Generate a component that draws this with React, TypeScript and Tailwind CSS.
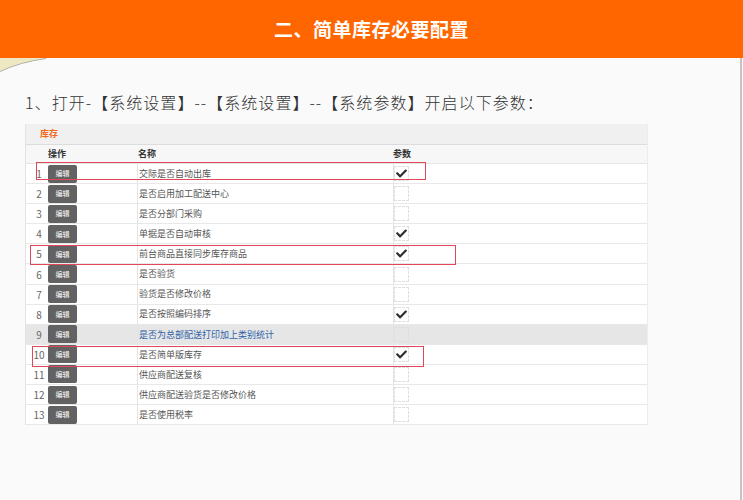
import React from "react";
import { FaCheck } from "react-icons/fa";

const rows: { n: number; name: string; checked: boolean; hl?: boolean }[] = [
  { n: 1, name: "交际是否自动出库", checked: true },
  { n: 2, name: "是否启用加工配送中心", checked: false },
  { n: 3, name: "是否分部门采购", checked: false },
  { n: 4, name: "单据是否自动审核", checked: true },
  { n: 5, name: "前台商品直接同步库存商品", checked: true },
  { n: 6, name: "是否验货", checked: false },
  { n: 7, name: "验货是否修改价格", checked: false },
  { n: 8, name: "是否按照编码排序", checked: true },
  { n: 9, name: "是否为总部配送打印加上类别统计", checked: false, hl: true },
  { n: 10, name: "是否简单版库存", checked: true },
  { n: 11, name: "供应商配送复核", checked: false },
  { n: 12, name: "供应商配送验货是否修改价格", checked: false },
  { n: 13, name: "是否使用税率", checked: false },
];

const cjk = { fontFamily: '"Noto Sans CJK SC", "Noto Sans", sans-serif' };

export default function App() {
  return (
    <div className="w-[743px] h-[500px] overflow-hidden bg-[#fafafa]" style={cjk}>
      <div className="h-[58px] bg-[#ff6600] flex items-center justify-center">
        <span className="text-white text-[19px] font-bold tracking-[0.5px]">二、简单库存必要配置</span>
      </div>
      <div className="relative w-[742px] h-[442px] border-r-2 border-[#c4c4c4]">
        <svg className="absolute left-0 top-0" width="48" height="15" viewBox="0 0 48 15">
          <path d="M0 0 L46 0 Q22 3 0 13 Z" fill="#eee8c2" />
          <path d="M0 13.5 Q20 4 46 0.5" stroke="#9a9a8a" strokeWidth="0.8" fill="none" />
        </svg>
        <div className="pt-[32px] pl-[25px] text-[16px] leading-[24px] text-[#333] tracking-[1.05px] font-light">
          1、打开-【系统设置】--【系统设置】--【系统参数】开启以下参数：
        </div>
        <div className="relative mt-[10px] ml-[25px] w-[623px] bg-white border-l border-[#e2e2e2] border-r border-r-[#ececec]">
          <div className="h-[21px] bg-[#f0f0f0] border-b border-[#dcdcdc] flex items-center pl-[14px]">
            <span className="text-[9px] font-bold text-[#f26a1b]">库存</span>
          </div>
          <div className="h-[19px] bg-[#f7f7f7] border-b border-[#e6e6e6] flex items-center text-[9px] font-bold text-[#333]">
            <div className="w-[22px]" />
            <div className="w-[89px]">操作</div>
            <div className="w-[256px] pl-[1px]">名称</div>
            <div className="flex-1">参数</div>
          </div>
          {rows.map((r) => (
            <div
              key={r.n}
              className={`h-[20.1px] flex items-stretch border-b border-[#e8e8e8] text-[9px] ${r.hl ? "bg-[#e6e6e6]" : "bg-white"}`}
            >
              <div className="w-[22px] flex items-center justify-center pl-[4px] text-[10px] text-[#666]">{r.n}</div>
              <div className="w-[89px] flex items-center">
                <div className="w-[29px] h-[18px] bg-[#626262] rounded-[2px] flex items-center justify-center text-white text-[7px]">编辑</div>
              </div>
              <div className={`w-[256px] border-l border-[#e4e4e4] flex items-center pl-[1px] ${r.hl ? "text-[#2f5fa8]" : "text-[#555]"}`}>
                {r.name}
              </div>
              <div className="flex-1 border-l border-[#e4e4e4] flex items-center">
                <div className="w-[15px] h-[15px] border border-dashed border-[#dedede] flex items-center justify-center">
                  {r.checked && <FaCheck className="text-[#2e2e2e] w-[11px] h-[11px]" />}
                </div>
              </div>
            </div>
          ))}
          <div className="absolute left-[10px] top-[38px] w-[390px] h-[18px] border-[1.5px] border-[#e0485a]" />
          <div className="absolute left-[4px] top-[121px] w-[426px] h-[20px] border-[1.5px] border-[#e0485a]" />
          <div className="absolute left-[6px] top-[222px] w-[392px] h-[21px] border-[1.5px] border-[#e0485a]" />
        </div>
      </div>
    </div>
  );
}
